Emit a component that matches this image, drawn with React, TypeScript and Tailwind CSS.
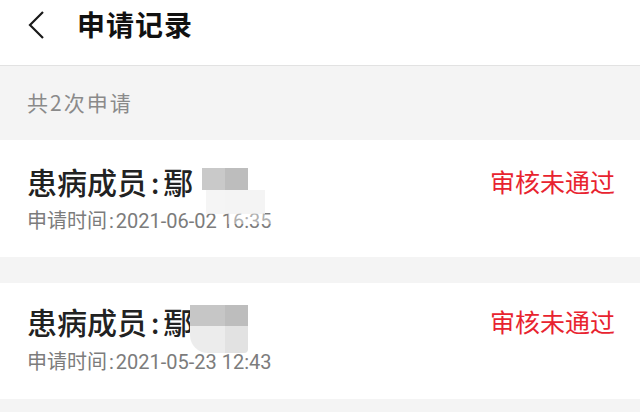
import React from "react";

const cjk = { fontFamily: '"Noto Sans CJK SC", "Noto Sans", sans-serif' };
const num = { fontFamily: 'Roboto, "Noto Sans CJK SC", sans-serif' };

function Record({ time, second }: { time: string; second?: boolean }) {
  return (
    <div className={second ? "relative bg-white pl-[27px] pr-[25px] pt-[21px] pb-[25px]" : "relative bg-white pl-[27px] pr-[25px] pt-[24px] pb-[24px]"}>
      <div className="flex items-start justify-between">
        <div className="flex flex-col">
          <div className="text-[30px] leading-[34px] text-[#222] font-medium whitespace-nowrap" style={cjk}>
            患病成员<span className="text-[28px] mx-[4px]">:</span>鄢
          </div>
          <div className={second ? "mt-[10px] text-[20px] leading-[24px] text-[#7c7c7c] whitespace-nowrap" : "mt-[9px] text-[20px] leading-[24px] text-[#7c7c7c] whitespace-nowrap"} style={num}>
            <span style={cjk}>申请时间</span><span className="mx-[2px]">:</span>{time}
          </div>
        </div>
        <div className="text-[25px] leading-[34px] text-[#e8232f] whitespace-nowrap" style={cjk}>
          审核未通过
        </div>
      </div>
      {second ? (
        <div className="absolute left-[190px] top-[22px] w-[60px] h-[48px]">
          <div className="flex h-[21px]">
            <div className="w-[35px] bg-[#c6c6c6]" />
            <div className="w-[23px] bg-[#bdbdbd]" />
          </div>
          <div className="flex h-[27px]">
            <div className="w-[35px] bg-[#ececec] rounded-bl-[18px]" />
            <div className="w-[23px] bg-[#e2e2e2] rounded-br-[4px]" />
          </div>
        </div>
      ) : (
        <div className="absolute left-[202px] top-[28px] w-[72px] h-[60px]">
          <div className="flex h-[22px]">
            <div className="w-[23px] bg-[#c9c9c9]" />
            <div className="w-[23px] bg-[#bdbdbd]" />
          </div>
          <div className="flex h-[24px] pl-[4px]">
            <div className="w-[19px] bg-[#f3f3f3]/80" />
            <div className="w-[40px] bg-[#f1f1f1]/80" />
          </div>
          <div className="h-[10px] ml-[26px] w-[44px] bg-white/40" />
        </div>
      )}
    </div>
  );
}

export default function App() {
  return (
    <div className="w-[640px] h-[412px] overflow-hidden bg-[#f4f4f4]">
      <div className="h-[66px] bg-white border-b border-[#e2e2e2] flex items-start pl-[27px]">
        <svg width="18" height="30" viewBox="0 0 18 30" className="mt-[10px]">
          <path d="M16 2 L3 15 L16 28" fill="none" stroke="#1a1a1a" strokeWidth="2.2" />
        </svg>
        <div className="ml-[32px] mt-[7px] text-[28px] leading-[34px] font-bold text-[#111] tracking-[1px]" style={cjk}>
          申请记录
        </div>
      </div>
      <div className="h-[74px] flex items-center pl-[27px] text-[21px] text-[#8a8a8a] tracking-[2px]" style={cjk}>
        共2次申请
      </div>
      <Record time="2021-06-02 16:35" />
      <div className="h-[26px]" />
      <Record time="2021-05-23 12:43" second />
    </div>
  );
}
